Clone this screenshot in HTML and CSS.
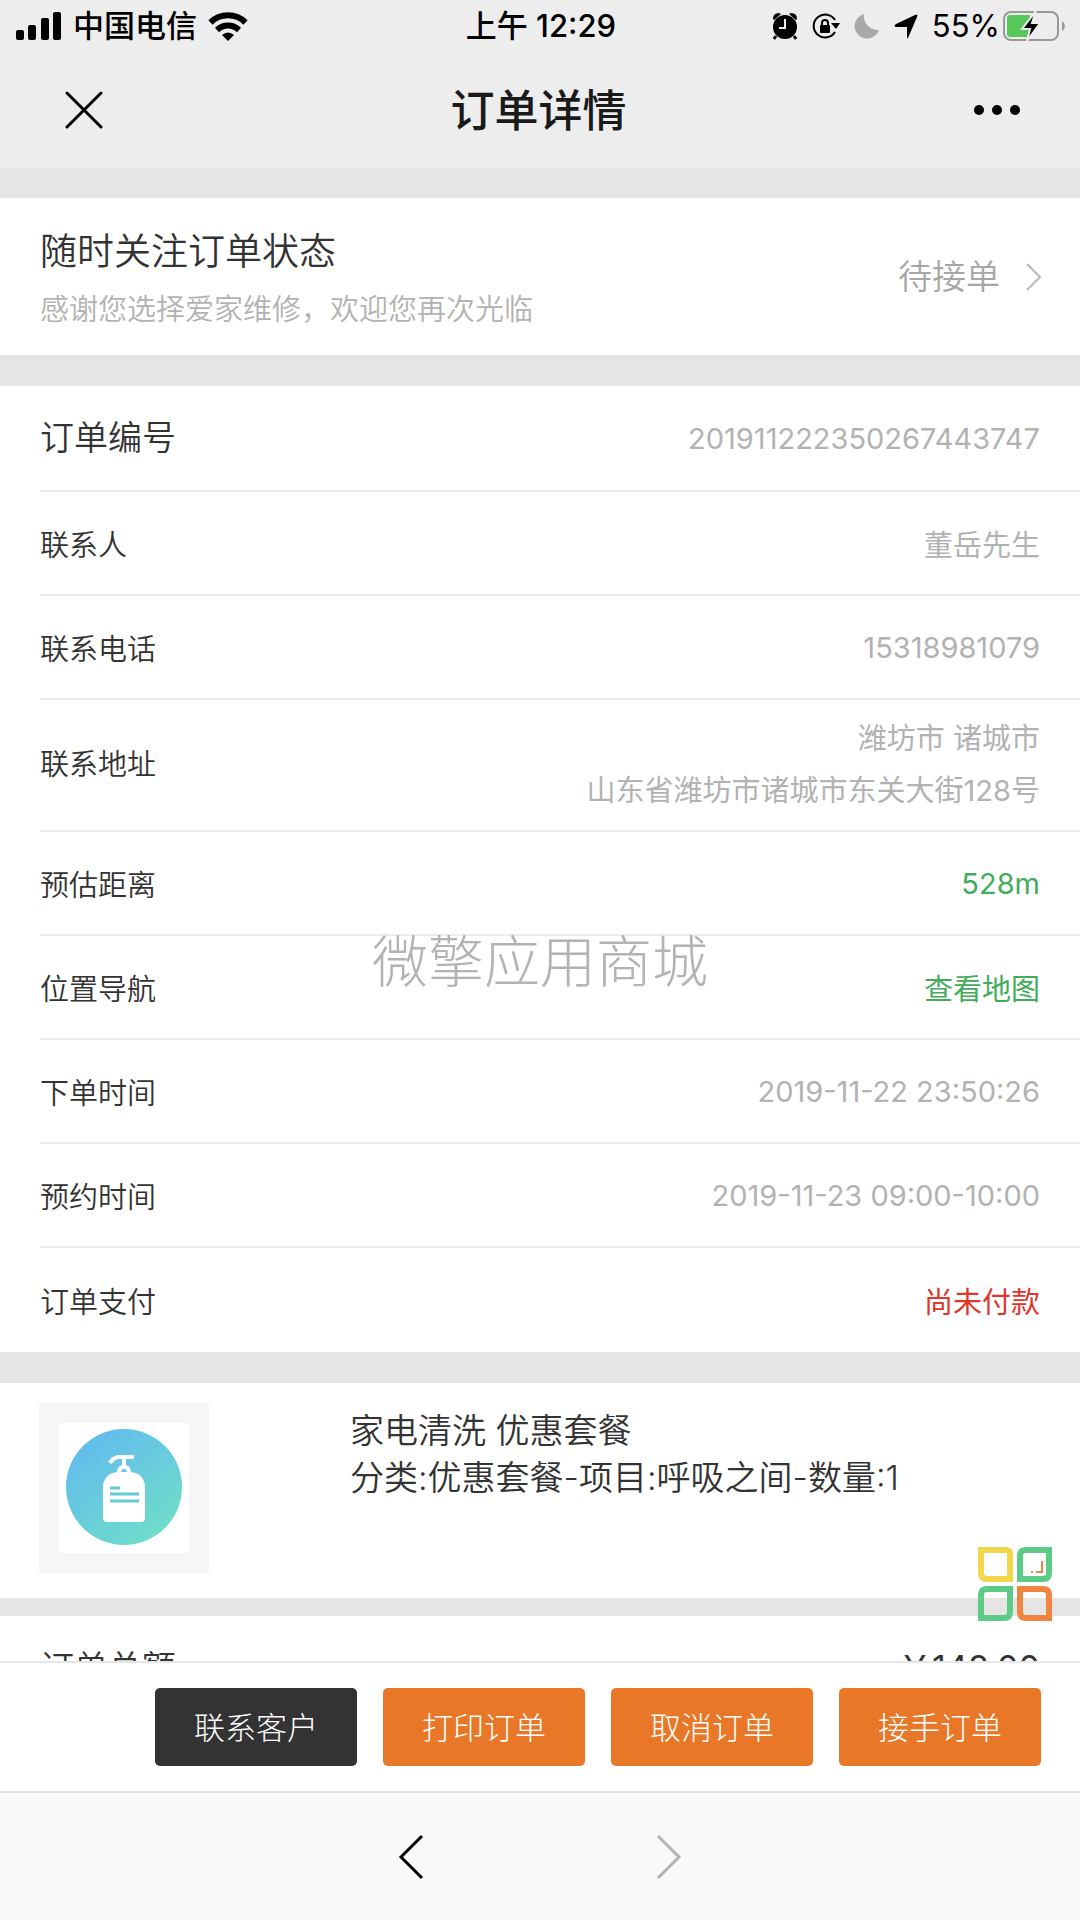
FILE: index.html
```html
<!DOCTYPE html>
<html lang="zh-CN">
<head>
    <meta charset="UTF-8">
    <meta name="viewport" content="width=device-width, initial-scale=1.0">
    <title>订单详情</title>
    <link rel="stylesheet" href="styles.css">
</head>
<body>

    <div class="status-bar">
        <div class="status-left">
            <svg width="46" height="30" viewBox="0 0 46 30">
                <rect x="0" y="19" width="8" height="10" rx="2"/>
                <rect x="12" y="14" width="8" height="15" rx="2"/>
                <rect x="25" y="7" width="8" height="22" rx="2"/>
                <rect x="37" y="1" width="8" height="28" rx="2"/>
            </svg>
            <span>中国电信</span>
            <svg class="wifi" width="40" height="30" viewBox="0 0 40 30">
                <path d="M2.500 11.500A25 25 0 0 1 37.500 11.500" fill="none" stroke="#000" stroke-width="6"/>
                <path d="M9 19A16 16 0 0 1 31 19" fill="none" stroke="#000" stroke-width="6"/>
                <path d="M14 24Q20 19 26 24L20 30Z"/>
            </svg>
        </div>
        <div class="status-time">上午 12:29</div>
        <div class="status-right">
            <svg width="26" height="28" viewBox="0 0 26 28">
                <circle cx="13" cy="15" r="12"/>
                <path d="M1 7Q1 1 7 1L9 2L2 8ZM25 7Q25 1 19 1L17 2L24 8Z"/>
                <path d="M4 24L2 27M22 24L24 27" stroke="#000" stroke-width="3"/>
                <path d="M13 7V16H7" fill="none" stroke="#ededed" stroke-width="2"/>
            </svg>
            <svg width="28" height="28" viewBox="0 0 28 28">
                <path d="M23 8A11.500 11.500 0 1 0 23 20" fill="none" stroke="#000" stroke-width="2"/>
                <path d="M19 11H28L24 17Z"/>
                <rect x="8" y="13" width="10" height="8" rx="1"/>
                <path d="M10 13V11A3 3 0 0 1 16 11V13" fill="none" stroke="#000" stroke-width="2"/>
            </svg>
            <svg width="26" height="28" viewBox="0 0 26 28">
                <path d="M10 2A14 14 0 0 0 25 18A12.500 12.500 0 1 1 10 2Z" fill="#a9a9a9"/>
            </svg>
            <svg width="24" height="28" viewBox="0 0 24 28">
                <path d="M23 3Q24 2 23 5L14 26Q13 27 13 25V15H2Q-1 14 2 12L21 3Q23 2 23 3Z"/>
            </svg>
            <span>55%</span>
            <svg class="battery" width="64" height="32" viewBox="0 0 64 32">
                <rect x="2" y="2" width="54" height="28" rx="7" fill="none" stroke="#999" stroke-width="2"/>
                <path d="M8 5H28V27H8Q5 27 5 24V8Q5 5 8 5Z" fill="#58c75b"/>
                <path d="M60 11Q63 13 63 16Q63 19 60 21Z" fill="#999"/>
                <path d="M34 1L20 19H28L25 31L38 13H30Z" stroke="#ededed" stroke-width="2"/>
            </svg>
        </div>
    </div>

    <header class="nav-bar">
        <button class="icon-btn" aria-label="关闭">
            <svg width="38" height="38" viewBox="0 0 38 38" fill="none" stroke="#000" stroke-width="3" stroke-linecap="round">
                <path d="M2 2L36 36M36 2L2 36"/>
            </svg>
        </button>
        <h1>订单详情</h1>
        <button class="icon-btn" aria-label="更多">
            <svg width="46" height="10" viewBox="0 0 46 10">
                <circle cx="5" cy="5" r="5"/>
                <circle cx="23" cy="5" r="5"/>
                <circle cx="41" cy="5" r="5"/>
            </svg>
        </button>
    </header>

    <main>
        <a class="order-status" href="#">
            <div class="status-text">
                <h2>随时关注订单状态</h2>
                <p>感谢您选择爱家维修，欢迎您再次光临</p>
            </div>
            <span class="state">待接单</span>
            <svg width="16" height="28" viewBox="0 0 16 28" fill="none" stroke="#b8b8b8" stroke-width="2">
                <path d="M1 1L14 14L1 27"/>
            </svg>
        </a>

        <dl class="info">
            <div class="row row-first">
                <dt class="large">订单编号</dt>
                <dd>201911222350267443747</dd>
            </div>
            <div class="row">
                <dt>联系人</dt>
                <dd>董岳先生</dd>
            </div>
            <div class="row">
                <dt>联系电话</dt>
                <dd>15318981079</dd>
            </div>
            <div class="row row-address">
                <dt>联系地址</dt>
                <dd>潍坊市 诸城市<br>山东省潍坊市诸城市东关大街128号</dd>
            </div>
            <div class="row">
                <dt>预估距离</dt>
                <dd class="green">528m</dd>
            </div>
            <div class="row">
                <dt>位置导航</dt>
                <dd><a class="green" href="#">查看地图</a></dd>
            </div>
            <div class="row">
                <dt>下单时间</dt>
                <dd>2019-11-22 23:50:26</dd>
            </div>
            <div class="row">
                <dt>预约时间</dt>
                <dd>2019-11-23 09:00-10:00</dd>
            </div>
            <div class="row">
                <dt>订单支付</dt>
                <dd class="red">尚未付款</dd>
            </div>
        </dl>

        <section class="product">
            <div class="thumb">
                <svg width="130" height="130" viewBox="0 0 130 130">
                    <defs>
                        <linearGradient id="aqua" x1="0.2" y1="0.1" x2="0.8" y2="0.9">
                            <stop offset="0" stop-color="#63bdec"/>
                            <stop offset="1" stop-color="#6edccb"/>
                        </linearGradient>
                    </defs>
                    <circle cx="65" cy="64" r="58" fill="url(#aqua)"/>
                    <path d="M51 40Q55 34 60 34H75M65 34V43" fill="none" stroke="#fff" stroke-width="4"/>
                    <path d="M60 50Q60 44 65 44Q70 44 70 50" fill="none" stroke="#fff" stroke-width="4"/>
                    <path d="M44 63Q46 49 60 49H70Q84 49 86 63V95Q86 99 82 99H48Q44 99 44 95Z" fill="#fff"/>
                    <path d="M51 65H61M51 71H80M51 78H80" stroke="#66c9d8" stroke-width="3"/>
                </svg>
            </div>
            <div class="product-text">
                <p>家电清洗 优惠套餐</p>
                <p>分类:优惠套餐-项目:呼吸之间-数量:1</p>
            </div>
        </section>

        <dl class="info">
            <div class="row">
                <dt class="large">订单总额</dt>
                <dd class="large">￥148.00</dd>
            </div>
        </dl>
    </main>

    <div class="watermark">微擎应用商城</div>

    <footer>
        <button class="float-menu" aria-label="菜单">
            <svg width="74" height="74" viewBox="0 0 74 74" fill="none" stroke-width="6">
                <path d="M3 3H28Q32 3 32 7V32H9Q3 32 3 26Z" stroke="#f2d64b"/>
                <path d="M71 3H48Q42 3 42 9V32H65Q71 32 71 26Z" stroke="#5bcb85"/>
                <path d="M3 71V48Q3 42 9 42H32V65Q32 71 26 71Z" stroke="#5bcb85"/>
                <path d="M42 42H65Q71 42 71 48V71H48Q42 71 42 65Z" stroke="#f08440"/>
                <path d="M64 14V25H58M55 25H53" stroke="#f08440" stroke-width="2"/>
            </svg>
        </button>
        <div class="actions">
            <button class="btn dark">联系客户</button>
            <button class="btn">打印订单</button>
            <button class="btn">取消订单</button>
            <button class="btn">接手订单</button>
        </div>
        <nav class="pager">
            <button class="icon-btn" aria-label="后退">
                <svg width="26" height="46" viewBox="0 0 26 46" fill="none" stroke="#000" stroke-width="3">
                    <path d="M24 2L3 23L24 44"/>
                </svg>
            </button>
            <button class="icon-btn" aria-label="前进">
                <svg width="26" height="46" viewBox="0 0 26 46" fill="none" stroke="#b3b3b5" stroke-width="3">
                    <path d="M2 2L23 23L2 44"/>
                </svg>
            </button>
        </nav>
    </footer>

</body>
</html>
```

FILE: styles.css
```css
* {
    box-sizing: border-box;
}
body {
    margin: 0;
    height: 100vh;
    overflow: hidden;
    display: flex;
    flex-direction: column;
    background: #e5e5e5;
    color: #333;
    font-family: Inter, "Noto Sans CJK SC", sans-serif;
    font-size: 29px;
    font-weight: 350;
}
h1, h2, p, dl, dd {
    margin: 0;
}
a {
    color: inherit;
    text-decoration: none;
}
button {
    padding: 0;
    border: none;
    background: none;
    font: inherit;
    cursor: pointer;
}
svg {
    display: block;
    flex: none;
}

/* top bars */
.status-bar {
    display: grid;
    grid-template-columns: 1fr auto 1fr;
    align-items: center;
    height: 52px;
    padding: 0 14px 0 16px;
    background: #ededed;
    color: #000;
    font-size: 31px;
    font-weight: 500;
    line-height: 52px;
}
.status-left, .status-right {
    display: flex;
    align-items: center;
}
.status-left {
    gap: 11px;
}
.status-right {
    justify-content: flex-end;
    gap: 14px;
}
.status-right span {
    font-weight: 400;
}
.battery {
    margin-left: -12px;
}
.nav-bar {
    display: flex;
    align-items: center;
    justify-content: space-between;
    height: 116px;
    padding: 0 60px 0 65px;
    background: #ededed;
}
.nav-bar h1 {
    padding-bottom: 4px;
    color: #1a1a1a;
    font-size: 44px;
    font-weight: 500;
}

/* order status */
main {
    flex: 1;
    min-height: 0;
    overflow: hidden;
    padding-top: 30px;
}
.order-status {
    display: flex;
    align-items: center;
    height: 157px;
    padding: 0 38px 0 40px;
    background: #fff;
}
.status-text {
    flex: 1;
    padding-top: 6px;
}
.status-text h2 {
    font-size: 37px;
    font-weight: 350;
    line-height: 60px;
}
.status-text p {
    color: #b2b2b2;
    line-height: 56px;
}
.state {
    margin-right: 26px;
    padding-bottom: 4px;
    color: #a6a6a6;
    font-size: 34px;
}

/* info rows */
.info {
    margin-top: 31px;
    padding-left: 40px;
    background: #fff;
}
.row {
    display: flex;
    align-items: center;
    justify-content: space-between;
    height: 104px;
    padding-right: 40px;
    border-bottom: 2px solid #ececec;
}
.row:last-child {
    border-bottom: none;
}
.row dd {
    color: #b2b2b2;
    font-weight: 400;
    text-align: right;
}
.row .large {
    padding-bottom: 6px;
    color: #333;
    font-size: 34px;
}
.row-first {
    height: 106px;
}
.row-address {
    height: 132px;
    line-height: 52px;
}
.row .green {
    color: #41ad5b;
}
.row .red {
    color: #e0352b;
}

/* product */
.product {
    display: flex;
    margin-top: 31px;
    height: 215px;
    padding: 20px 39px;
    background: #fff;
}
.product + .info {
    margin-top: 18px;
}
.thumb {
    width: 170px;
    height: 170px;
    padding: 20px;
    background: #f6f6f6;
}
.thumb svg {
    background: #fff;
}
.product-text {
    margin-left: 141px;
    padding-top: 4px;
    font-size: 34px;
    line-height: 47px;
}

.watermark {
    position: absolute;
    top: 922px;
    left: 0;
    right: 0;
    color: #b3b3b3;
    font-size: 56px;
    font-weight: 300;
    line-height: 80px;
    text-align: center;
    pointer-events: none;
}

/* bottom */
footer {
    position: relative;
    background: #fff;
}
.float-menu {
    position: absolute;
    top: -114px;
    right: 28px;
}
.actions {
    display: flex;
    align-items: center;
    justify-content: flex-end;
    gap: 26px;
    height: 130px;
    padding: 0 39px;
    border-top: 2px solid #e6e6e6;
}
.btn {
    width: 202px;
    height: 78px;
    padding-bottom: 4px;
    border-radius: 5px;
    background: #e87827;
    color: #fff;
    font-size: 31px;
    font-weight: 300;
}
.btn.dark {
    background: #333;
}
.pager {
    display: flex;
    align-items: center;
    justify-content: center;
    gap: 232px;
    height: 129px;
    background: #f9f9fb;
    border-top: 2px solid #e2e2e4;
}
```
